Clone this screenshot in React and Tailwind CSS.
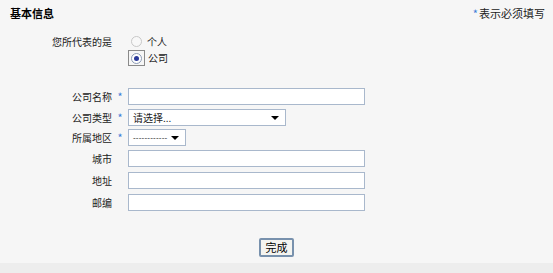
export default function App() {
  const font = { fontFamily: '"Noto Sans CJK SC", "Noto Sans", sans-serif' };
  const Star = () => <span className="text-[#3b7dd8] text-[11px]">*</span>;
  const inputCls = "h-[17px] w-[237px] border border-[#a9b8cc] bg-white";
  return (
    <div className="w-[553px] h-[273px] bg-[#f6f6f6] flex flex-col text-[10px] text-[#222] leading-none" style={font}>
      <div className="flex justify-between items-center pl-[10px] pr-[8px] pt-[8px]">
        <span className="font-bold text-[11px] text-black">基本信息</span>
        <span className="text-[11px] flex items-center gap-[1px]"><Star />表示必须填写</span>
      </div>
      <div className="grid grid-cols-[112px_16px_1fr] mt-[16px]">
        <div className="text-right pt-[2px]">您所代表的是</div>
        <div></div>
        <div className="flex flex-col">
          <label className="flex items-center h-[13px] ml-[2px] gap-[2px]">
            <span className="w-[13px] h-[13px] flex items-center justify-center">
              <span className="w-[11px] h-[11px] rounded-full border border-[#c8c8c8] bg-[#f8f8f8]"></span>
            </span>
            <span className="ml-[2px]">个人</span>
          </label>
          <label className="flex items-center h-[16px] mt-[2px] gap-[2px]">
            <span className="w-[17px] h-[16px] border border-[#8a8a8a] flex items-center justify-center">
              <span className="w-[11px] h-[11px] rounded-full border border-[#8c9bb5] bg-white flex items-center justify-center">
                <span className="w-[5px] h-[5px] rounded-full bg-[#2b3a9a]"></span>
              </span>
            </span>
            <span className="ml-[1px]">公司</span>
          </label>
        </div>
      </div>
      <div className="grid grid-cols-[112px_16px_1fr] gap-y-[4px] mt-[22px] items-center">
        <div className="text-right">公司名称</div>
        <div className="text-center"><Star /></div>
        <div className={inputCls}></div>

        <div className="text-right">公司类型</div>
        <div className="text-center"><Star /></div>
        <div className="h-[17px] w-[158px] border border-[#a9b8cc] bg-white flex items-center justify-between pl-[4px] pr-[6px]">
          <span>请选择...</span>
          <span className="w-0 h-0 border-l-[4px] border-r-[4px] border-t-[4px] border-l-transparent border-r-transparent border-t-black"></span>
        </div>

        <div className="text-right -mt-[1px]">所属地区</div>
        <div className="text-center -mt-[1px]"><Star /></div>
        <div className="h-[17px] w-[58px] border border-[#a9b8cc] bg-white flex items-center justify-between pl-[4px] pr-[6px] -mt-[1px]">
          <span className="text-[8px] tracking-[0.2px]" style={{ fontFamily: '"Liberation Sans", sans-serif' }}>------------</span>
          <span className="w-0 h-0 border-l-[4px] border-r-[4px] border-t-[4px] border-l-transparent border-r-transparent border-t-black"></span>
        </div>

        <div className="text-right">城市</div>
        <div></div>
        <div className={inputCls}></div>

        <div className="text-right mt-[1px]">地址</div>
        <div></div>
        <div className={inputCls + " mt-[1px]"}></div>

        <div className="text-right mt-[1px]">邮编</div>
        <div></div>
        <div className={inputCls + " mt-[1px]"}></div>
      </div>
      <div className="flex justify-center mt-[27px]">
        <button className="w-[35px] h-[19px] border-2 border-[#7891ad] rounded-[2px] bg-[#f4f4f0] text-[11px] text-black flex items-center justify-center" style={font}>完成</button>
      </div>
      <div className="flex-1"></div>
      <div className="h-[10px] bg-[#ededed]"></div>
    </div>
  );
}
